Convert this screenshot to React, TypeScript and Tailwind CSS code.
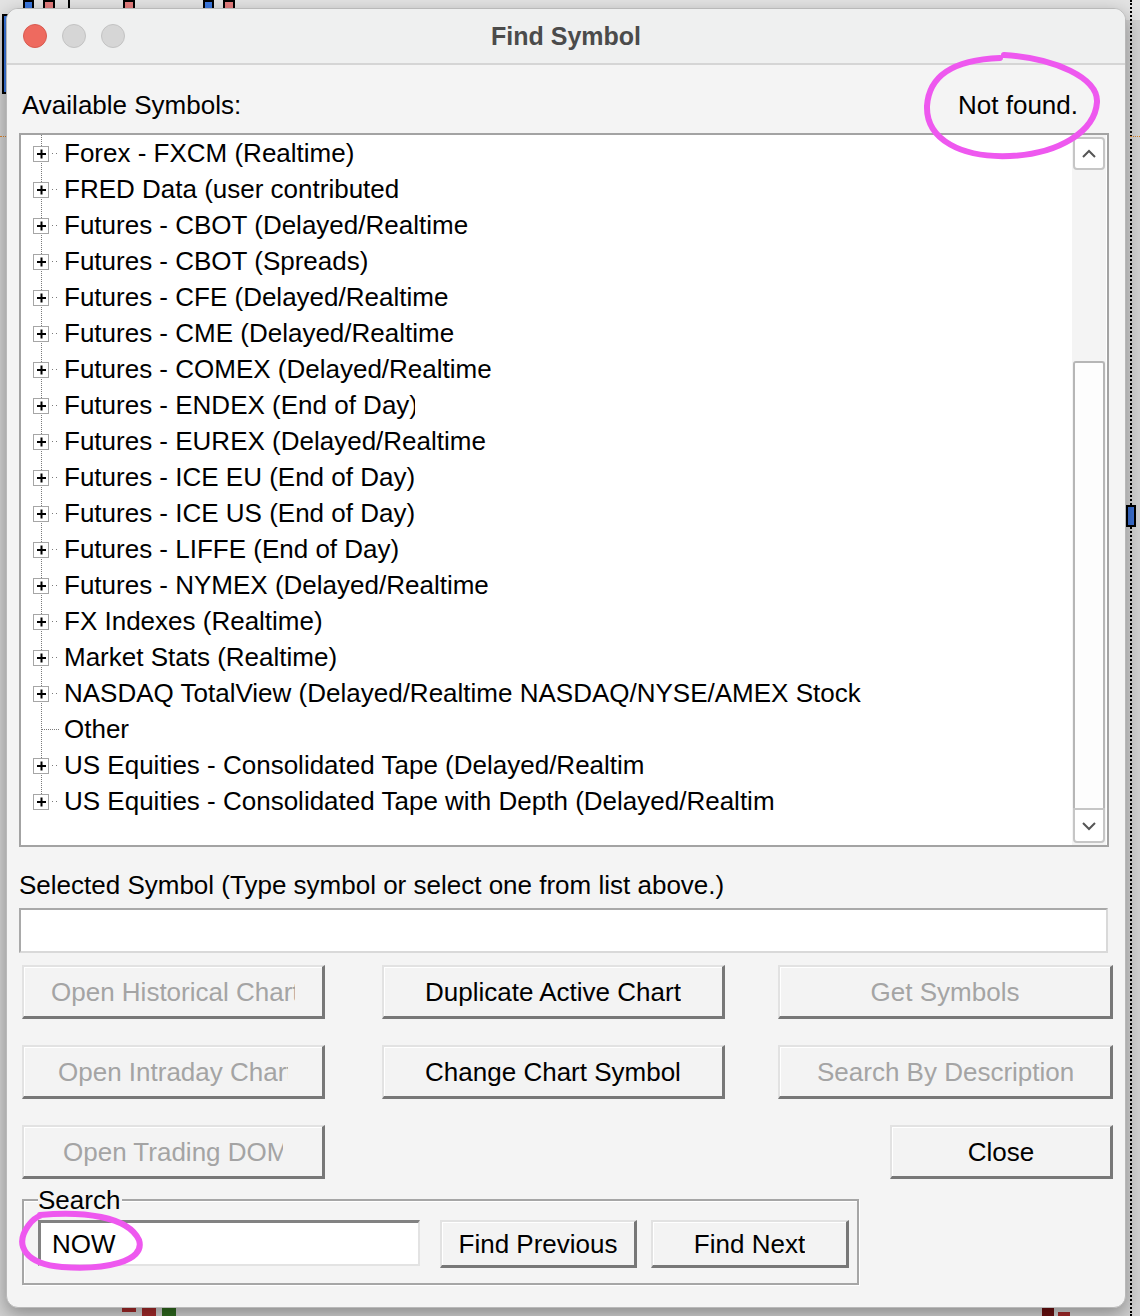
import React from "react";

const FONT = { fontFamily: '"Liberation Sans", Arial, sans-serif' };

type Row = { text: string; clip?: number; leaf?: boolean };

const rows: Row[] = [
  { text: "Forex - FXCM (Realtime)" },
  { text: "FRED Data (user contributed", clip: 341 },
  { text: "Futures - CBOT (Delayed/Realtime", clip: 411 },
  { text: "Futures - CBOT (Spreads)", clip: 304 },
  { text: "Futures - CFE (Delayed/Realtime", clip: 392 },
  { text: "Futures - CME (Delayed/Realtime", clip: 397 },
  { text: "Futures - COMEX (Delayed/Realtime", clip: 435 },
  { text: "Futures - ENDEX (End of Day)", clip: 351 },
  { text: "Futures - EUREX (Delayed/Realtime", clip: 429 },
  { text: "Futures - ICE EU (End of Day)" },
  { text: "Futures - ICE US (End of Day)" },
  { text: "Futures - LIFFE (End of Day)" },
  { text: "Futures - NYMEX (Delayed/Realtime", clip: 433 },
  { text: "FX Indexes (Realtime)" },
  { text: "Market Stats (Realtime)" },
  { text: "NASDAQ TotalView (Delayed/Realtime NASDAQ/NYSE/AMEX Stock", clip: 829 },
  { text: "Other", leaf: true },
  { text: "US Equities - Consolidated Tape (Delayed/Realtim", clip: 601 },
  { text: "US Equities - Consolidated Tape with Depth (Delayed/Realtim", clip: 726 },
];

function Connector({ leaf, last }: { leaf?: boolean; last?: boolean }) {
  return (
    <svg width="43" height="36" viewBox="0 0 43 36" className="shrink-0">
      <line
        x1="20.5"
        y1="0"
        x2="20.5"
        y2={last ? 11 : 36}
        stroke="#7a7a7a"
        strokeWidth="1"
        strokeDasharray="1 1"
      />
      {leaf ? (
        <line x1="21" y1="18.5" x2="38" y2="18.5" stroke="#7a7a7a" strokeWidth="1" strokeDasharray="1 1" />
      ) : (
        <>
          <rect x="12.5" y="11.5" width="15" height="15" fill="#ffffff" stroke="#a6a6a6" strokeWidth="1" />
          <rect x="16" y="18" width="9" height="2" fill="#000" />
          <rect x="19.5" y="14.5" width="2" height="9" fill="#000" />
          <rect x="31" y="18" width="1" height="1" fill="#7a7a7a" />
          <rect x="35" y="18" width="1" height="1" fill="#7a7a7a" />
        </>
      )}
    </svg>
  );
}

function Btn({
  label,
  w,
  h = 54,
  disabled,
  clip,
  className = "",
}: {
  label: string;
  w: number;
  h?: number;
  disabled?: boolean;
  clip?: number;
  className?: string;
}) {
  return (
    <div
      className={`flex items-center justify-center bg-[#f3f3f3] border-t-2 border-l-2 border-t-[#e2e2e2] border-l-[#e2e2e2] border-b-[3px] border-r-[3px] border-b-[#777777] border-r-[#777777] shadow-[inset_1px_1px_0_#ffffff] shrink-0 ${className}`}
      style={{ width: w, height: h }}
    >
      <span
        className={`block overflow-hidden whitespace-nowrap text-[26px] leading-[30px] ${
          disabled ? "text-[#a4a4a4]" : "text-black"
        }`}
        style={clip ? { maxWidth: clip } : undefined}
      >
        {label}
      </span>
    </div>
  );
}

export default function App() {
  return (
    <div className="relative w-[1140px] h-[1316px] overflow-hidden bg-[#d2d2d2]" style={FONT}>
      {/* background chart bits */}
      <div className="absolute left-0 top-0 w-[1140px] h-[20px] bg-[#e3e3e3]" />
      <div className="absolute left-[2px] top-[14px] w-[8px] h-[80px] bg-[#3b78e0] border-2 border-black" />
      <div className="absolute left-[23px] top-0 w-[11px] h-[10px] bg-[#3b78e0] border-2 border-black" />
      <div className="absolute left-[43px] top-0 w-[12px] h-[10px] bg-[#e57d7d] border-2 border-black" />
      <div className="absolute left-[68px] top-0 w-[2px] h-[10px] bg-black" />
      <div className="absolute left-[123px] top-0 w-[12px] h-[10px] bg-[#e57d7d] border-2 border-black" />
      <div className="absolute left-[203px] top-0 w-[11px] h-[10px] bg-[#3b78e0] border-2 border-black" />
      <div className="absolute left-[223px] top-0 w-[12px] h-[10px] bg-[#e57d7d] border-2 border-black" />
      <div className="absolute left-[1130px] top-0 w-0 h-[1316px] border-l-2 border-dotted border-black" />
      <div className="absolute left-[1126px] top-[505px] w-[10px] h-[22px] bg-[#3b6fd0] border-2 border-black" />
      <div className="absolute left-[1130px] top-[136px] w-[10px] h-0 border-t border-dotted border-[#d9822b]" />
      <div className="absolute left-0 top-[136px] w-[6px] h-0 border-t border-dotted border-[#d9822b]" />
      <div className="absolute left-[122px] top-[1308px] w-[14px] h-[4px] bg-[#a52a2a]" />
      <div className="absolute left-[142px] top-[1306px] w-[14px] h-[10px] bg-[#a52a2a] border-t-2 border-[#5a1010]" />
      <div className="absolute left-[162px] top-[1306px] w-[14px] h-[10px] bg-[#2e6a1e]" />
      <div className="absolute left-[1042px] top-[1306px] w-[12px] h-[10px] bg-[#6b0f0f]" />
      <div className="absolute left-[1058px] top-[1312px] w-[12px] h-[4px] bg-[#a52a2a]" />

      <div className="relative pl-[6px] pt-[8px]">
        <div className="relative w-[1120px] h-[1300px] rounded-[12px] border border-[#b9b9b9] bg-[#f4f4f4] flex flex-col overflow-hidden shadow-[0_6px_18px_rgba(0,0,0,0.35)]">
          {/* Title bar */}
          <div className="h-[56px] shrink-0 bg-[#eff0f0] border-b-2 border-[#d5d5d5] grid grid-cols-[1fr_auto_1fr] items-center">
            <div className="flex items-center gap-[15px] pl-[16px]">
              <div className="w-[24px] h-[24px] rounded-full bg-[#ee6a5f] border border-[#d85a50]" />
              <div className="w-[24px] h-[24px] rounded-full bg-[#d6d6d6] border border-[#c3c3c3]" />
              <div className="w-[24px] h-[24px] rounded-full bg-[#d6d6d6] border border-[#c3c3c3]" />
            </div>
            <div className="text-[25px] font-bold text-[#4b4b4b] leading-[30px]">Find Symbol</div>
            <div />
          </div>

          {/* Body */}
          <div className="flex-1 flex flex-col pl-[12px] pr-[16px]">
            {/* Header */}
            <div className="h-[68px] shrink-0 flex items-center justify-between pt-[12px]">
              <span className="ml-[3px] text-[26px] leading-[28px] text-black">Available Symbols:</span>
              <span className="mr-[31px] text-[26px] leading-[28px] text-black">Not found.</span>
            </div>

            {/* Tree box */}
            <div className="h-[714px] shrink-0 border-2 border-[#a3a3a3] bg-white flex">
              <div className="flex-1 flex flex-col overflow-hidden">
                {rows.map((r, i) => (
                  <div key={i} className="h-[36px] shrink-0 flex items-center">
                    <Connector leaf={r.leaf} last={i === rows.length - 1} />
                    <span
                      className="block overflow-hidden whitespace-nowrap text-[26px] leading-[36px] text-black"
                      style={r.clip ? { maxWidth: r.clip } : undefined}
                    >
                      {r.text}
                    </span>
                  </div>
                ))}
              </div>
              {/* Scrollbar */}
              <div className="w-[34px] mr-[1px] bg-[#f4f4f4] flex flex-col py-[2px]">
                <div className="h-[33px] mx-[1px] rounded-[4px] border-2 border-[#c6c6c6] bg-white flex items-center justify-center">
                  <svg width="16" height="10" viewBox="0 0 16 10">
                    <path d="M2 8 L8 2 L14 8" fill="none" stroke="#555" strokeWidth="2" />
                  </svg>
                </div>
                <div className="h-[191px]" />
                <div className="flex-1 mx-[1px] rounded-t-[3px] border-2 border-b-0 border-[#b6b6b6] bg-[#fdfdfd]" />
                <div className="h-[35px] mx-[1px] rounded-b-[4px] border-2 border-[#c6c6c6] bg-white flex items-center justify-center">
                  <svg width="16" height="10" viewBox="0 0 16 10">
                    <path d="M2 2 L8 8 L14 2" fill="none" stroke="#555" strokeWidth="2" />
                  </svg>
                </div>
              </div>
            </div>

            {/* Selected symbol */}
            <div className="mt-[24px] h-[28px] text-[26px] leading-[28px] text-black whitespace-nowrap">
              Selected Symbol (Type symbol or select one from list above.)
            </div>
            <div className="mt-[9px] h-[45px] w-[1089px] bg-white border-2 border-t-[#a9a9a9] border-l-[#a9a9a9] border-b-[#d9d9d9] border-r-[#d9d9d9]" />

            {/* Buttons */}
            <div className="mt-[12px] flex">
              <Btn label="Open Historical Chart" w={303} disabled clip={244} className="ml-[3px]" />
              <Btn label="Duplicate Active Chart" w={343} className="ml-[57px]" />
              <Btn label="Get Symbols" w={335} disabled clip={150} className="ml-[53px]" />
            </div>
            <div className="mt-[26px] flex">
              <Btn label="Open Intraday Chart" w={303} disabled clip={230} className="ml-[3px]" />
              <Btn label="Change Chart Symbol" w={343} className="ml-[57px]" />
              <Btn label="Search By Description" w={335} disabled clip={256} className="ml-[53px]" />
            </div>
            <div className="mt-[26px] flex">
              <Btn label="Open Trading DOM" w={303} disabled clip={220} className="ml-[3px]" />
              <Btn label="Close" w={223} className="ml-[565px]" />
            </div>

            {/* Search group */}
            <div className="relative mt-[20px] ml-[3px] w-[837px] h-[86px] border-2 border-[#a6a6a6] shadow-[inset_1px_1px_0_#ffffff,1px_1px_0_#ffffff] flex items-start pl-[14px] pt-[19px]">
              <span className="absolute left-[14px] top-[-15px] bg-[#f4f4f4] text-[26px] leading-[28px] text-black pr-[2px]">
                Search
              </span>
              <div className="w-[382px] h-[46px] shrink-0 bg-white border-t-[3px] border-l-[3px] border-b-2 border-r-2 border-t-[#828282] border-l-[#828282] border-b-[#e3e3e3] border-r-[#e3e3e3] flex items-center pl-[11px]">
                <span className="text-[26px] leading-[30px] text-black">NOW</span>
              </div>
              <Btn label="Find Previous" w={197} h={48} className="ml-[20px]" />
              <Btn label="Find Next" w={198} h={48} className="ml-[14px]" />
            </div>
          </div>
        </div>
      </div>

      {/* hand-drawn annotations */}
      <svg className="absolute left-0 top-0 pointer-events-none" width="1140" height="1316" viewBox="0 0 1140 1316">
        <path
          d="M1004 55 C1055 58 1098 78 1097 102 C1095 132 1058 154 1010 156 C962 158 926 140 927 106 C929 76 952 60 1000 58"
          fill="none"
          stroke="#ee58ef"
          strokeWidth="6"
          strokeLinecap="round"
        />
        <path
          d="M40 1215 C82 1211 128 1216 139 1240 C146 1262 104 1270 62 1267 C26 1264 14 1246 28 1226 C32 1220 36 1217 42 1215"
          fill="none"
          stroke="#ee58ef"
          strokeWidth="6"
          strokeLinecap="round"
        />
      </svg>
    </div>
  );
}
